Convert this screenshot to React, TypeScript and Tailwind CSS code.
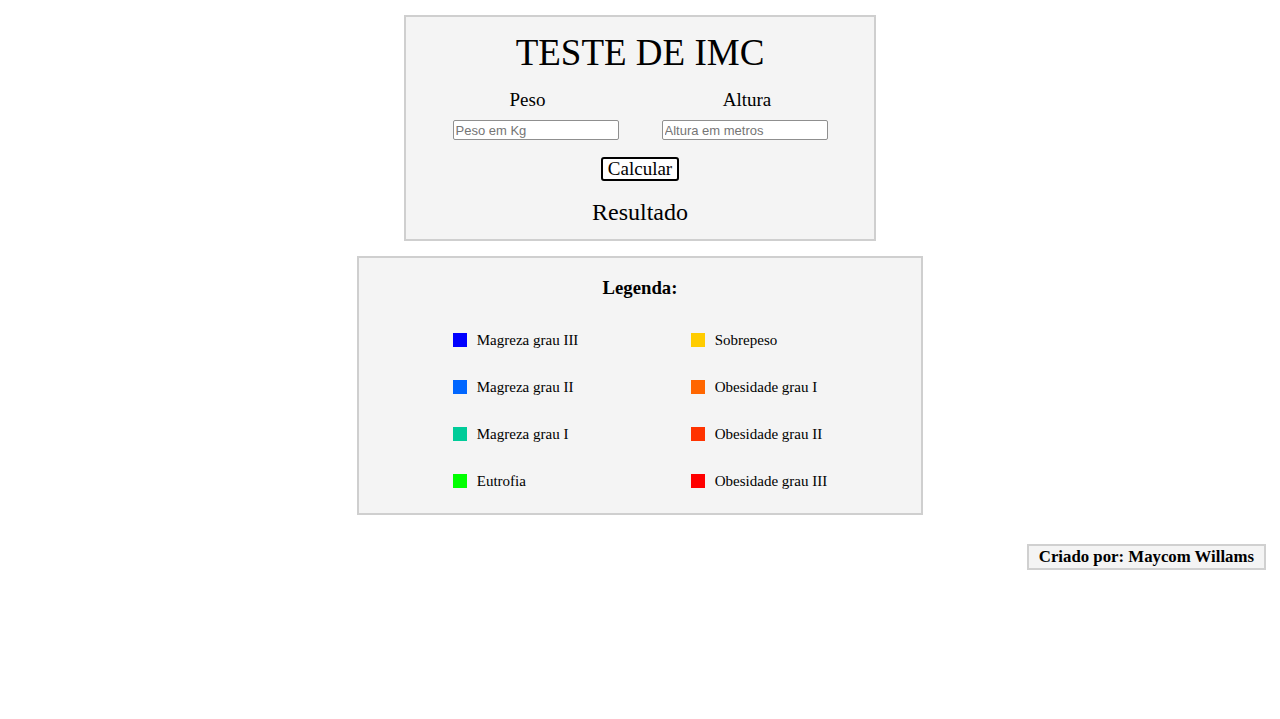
import React from 'react';

const legendLeft = [
  { color: 'bg-[#0000ff]', label: 'Magreza grau III' },
  { color: 'bg-[#0066ff]', label: 'Magreza grau II' },
  { color: 'bg-[#00cc99]', label: 'Magreza grau I' },
  { color: 'bg-[#00ff00]', label: 'Eutrofia' },
];

const legendRight = [
  { color: 'bg-[#ffcc00]', label: 'Sobrepeso' },
  { color: 'bg-[#ff6600]', label: 'Obesidade grau I' },
  { color: 'bg-[#ff3300]', label: 'Obesidade grau II' },
  { color: 'bg-[#ff0000]', label: 'Obesidade grau III' },
];

const LegendItem: React.FC<{ color: string; label: string }> = ({ color, label }) => (
  <div className="flex h-[20px] items-center gap-[10px]">
    <span className={`h-[14px] w-[14px] shrink-0 ${color}`}></span>
    <span className="text-[15px] leading-[20px] text-black whitespace-nowrap">{label}</span>
  </div>
);

export default function App() {
  return (
    <div className="min-h-[719px] bg-white pt-[15px] text-black" style={{ fontFamily: '"Liberation Serif", "Times New Roman", serif' }}>
      {/* Calculadora */}
      <div className="mx-auto w-[472px] border-2 border-[#cfcfcf] bg-[#f4f4f4] pb-[13px] text-center">
        <h1 className="h-[71px] text-[37px] leading-[71px]">TESTE DE IMC</h1>

        <div className="flex justify-center gap-[43px]">
          <div className="flex w-[166px] flex-col items-center">
            <label className="h-[24px] pr-4 text-[19px] leading-[24px]">Peso</label>
            <input
              type="text"
              placeholder="Peso em Kg"
              className="mt-[8px] h-[20px] w-[166px] rounded-[2px] border border-[#8f8f8f] bg-white px-[2px] text-[13px] placeholder:text-[#757575]"
              style={{ fontFamily: '"Liberation Sans", Arial, sans-serif' }}
            />
          </div>
          <div className="flex w-[166px] flex-col items-center">
            <label className="h-[24px] pl-[5px] text-[19px] leading-[24px]">Altura</label>
            <input
              type="text"
              placeholder="Altura em metros"
              className="mt-[8px] h-[20px] w-[166px] rounded-[2px] border border-[#8f8f8f] bg-white px-[2px] text-[13px] placeholder:text-[#757575]"
              style={{ fontFamily: '"Liberation Sans", Arial, sans-serif' }}
            />
          </div>
        </div>

        <button className="mt-[17px] h-[24px] w-[78px] rounded-[3px] border-2 border-black bg-white text-[19px] leading-[20px]">
          Calcular
        </button>

        <p className="mt-[16px] h-[28px] text-[24px] leading-[28px]">Resultado</p>
      </div>

      {/* Legenda */}
      <div className="mx-auto mt-[15px] w-[566px] border-2 border-[#cfcfcf] bg-[#f4f4f4] pb-[22px] pt-[18px]">
        <h3 className="h-[24px] text-center text-[18.72px] font-bold leading-[24px]">Legenda:</h3>
        <div className="mx-auto mt-[30px] grid w-fit grid-cols-[238px_auto] gap-y-[27px]">
          {legendLeft.map((item, i) => (
            <React.Fragment key={i}>
              <LegendItem color={item.color} label={item.label} />
              <LegendItem color={legendRight[i].color} label={legendRight[i].label} />
            </React.Fragment>
          ))}
        </div>
      </div>

      {/* Rodapé */}
      <div className="mt-[29px] flex justify-end pr-[14px]">
        <div className="h-[26px] border-2 border-[#d0d0d0] bg-[#f4f4f4] px-[10px] text-[16.8px] font-bold leading-[22px]">
          Criado por: Maycom Willams
        </div>
      </div>
    </div>
  );
}
